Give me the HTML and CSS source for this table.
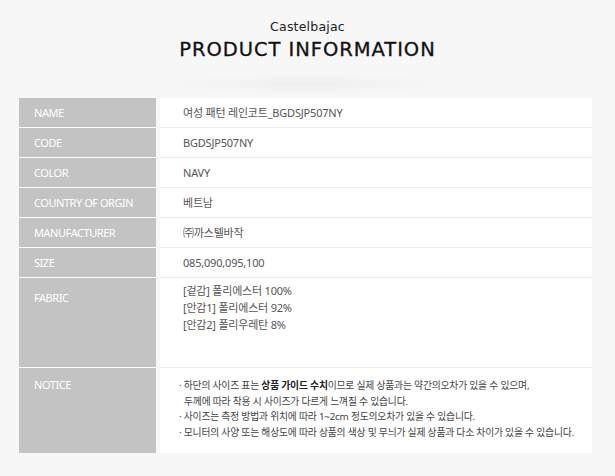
FILE: index.html
```html
<!DOCTYPE html>
<html lang="ko">
<head>
<meta charset="utf-8">
<link rel="stylesheet" href="styles.css">
</head>
<body>
<div class="page">
  <header class="head">
    <div class="brand">Castelbajac</div>
    <h1 class="title">PRODUCT INFORMATION</h1>
  </header>
  <div class="info">
    <div class="lab">NAME</div><div class="val">여성 패턴 레인코트_BGDSJP507NY</div>
    <div class="lab">CODE</div><div class="val">BGDSJP507NY</div>
    <div class="lab">COLOR</div><div class="val">NAVY</div>
    <div class="lab">COUNTRY OF ORGIN</div><div class="val">베트남</div>
    <div class="lab">MANUFACTURER</div><div class="val">㈜까스텔바작</div>
    <div class="lab">SIZE</div><div class="val">085,090,095,100</div>
    <div class="lab tall">FABRIC</div><div class="val tall multi">[겉감] 폴리에스터 100%<br>[안감1] 폴리에스터 92%<br>[안감2] 폴리우레탄 8%</div>
    <div class="lab notice last">NOTICE</div>
    <div class="val notice last">
      <p>· 하단의 사이즈 표는 <b>상품 가이드 수치</b>이므로 실제 상품과는 약간의오차가 있을 수 있으며,<br><span class="ind">두께에 따라 착용 시 사이즈가 다르게 느껴질 수 있습니다.</span></p>
      <p>· 사이즈는 측정 방법과 위치에 따라 1~2cm 정도의오차가 있을 수 있습니다.</p>
      <p>· 모니터의 사양 또는 해상도에 따라 상품의 색상 및 무늬가 실제 상품과 다소 차이가 있을 수 있습니다.</p>
    </div>
  </div>
</div>
</body>
</html>
```

FILE: styles.css
```css
html, body {
  margin: 0;
  padding: 0;
  background: #f7f7f7;
}
.page {
  width: 615px;
  height: 476px;
  font-family: "Noto Sans", "Noto Sans CJK KR", sans-serif;
}
.head {
  height: 98px;
  box-sizing: border-box;
  padding-top: 19px;
  text-align: center;
  background:
    radial-gradient(ellipse 150px 10px at 307px 84px, rgba(0,0,0,0.035), rgba(0,0,0,0) 100%),
    #f7f7f7;
}
.brand {
  font-family: "DejaVu Sans", sans-serif;
  font-size: 12.5px;
  line-height: 16px;
  color: #222;
  letter-spacing: 0.2px;
}
.title {
  margin: 4px 0 0;
  font-family: "DejaVu Sans", sans-serif;
  font-weight: normal;
  font-size: 19.5px;
  line-height: 22px;
  color: #111;
  letter-spacing: 0.95px;
  -webkit-text-stroke: 0.3px #111;
}
.info {
  margin-left: 19px;
  width: 573px;
  display: grid;
  grid-template-columns: 137px 1fr;
  column-gap: 4px;
}
.lab {
  height: 29px;
  border-bottom: 1px solid #fff;
  background: #c3c3c3;
  color: #fff;
  font-size: 11px;
  line-height: 29px;
  padding-left: 15px;
  letter-spacing: -0.45px;
}
.val {
  height: 29px;
  border-bottom: 1px solid #ececec;
  background: #fff;
  color: #555;
  font-size: 11px;
  line-height: 29px;
  padding-left: 23px;
  letter-spacing: -0.2px;
}
.tall { height: 89px; }
.lab.tall { line-height: 40px; }
.multi {
  line-height: 17px;
  padding-top: 4px;
  height: 85px;
}
.notice { height: 85px; border-bottom: 0; }
.lab.notice { line-height: 34px; }
.val.notice {
  padding-left: 19px;
  padding-top: 10px;
  height: 75px;
  font-size: 9.8px;
  line-height: 15.5px;
  color: #444;
  letter-spacing: -0.2px;
}
.val.notice p { margin: 0; }
.val.notice b { color: #222; }
.ind { padding-left: 5px; }
```
